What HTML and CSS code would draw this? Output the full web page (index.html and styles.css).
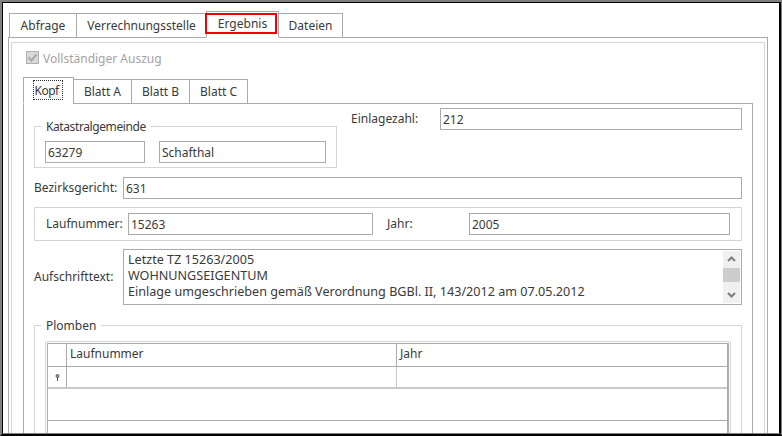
FILE: index.html
```html
<!DOCTYPE html>
<html lang="de">
<head>
<meta charset="utf-8">
<title>Ergebnis</title>
<link rel="stylesheet" href="styles.css">
</head>
<body>
<div class="frame">
<div class="window">
  <div class="tabs">
    <div class="tab t-abfrage">Abfrage</div>
    <div class="tab t-verr">Verrechnungsstelle</div>
    <div class="tab t-erg">Ergebnis<span class="marker"></span></div>
    <div class="tab t-dat">Dateien</div>
  </div>
  <div class="panel">
    <div class="panel-inner">
      <div class="check-row">
        <svg class="check" width="13" height="13" viewBox="0 0 13 13"><rect x=".5" y=".5" width="12" height="12" fill="#d8d8d8" stroke="#b0b0b0"/><path d="M2.500 6.500 5.500 9.500 10.500 3.500" fill="none" stroke="#a8a8a8" stroke-width="2"/></svg>
        <span class="check-label">Vollständiger Auszug</span>
      </div>
      <div class="subtabs">
        <div class="subtab first"><span class="focus">Kopf</span></div>
        <div class="subtab">Blatt A</div>
        <div class="subtab">Blatt B</div>
        <div class="subtab">Blatt C</div>
      </div>
      <div class="subpanel">
        <div class="top-row">
          <fieldset class="group kat">
            <legend class="kat-legend">Katastralgemeinde</legend>
            <div class="field w100">63279</div>
            <div class="field w167">Schafthal</div>
          </fieldset>
          <div class="einlage">
            <label class="lbl l-einlage">Einlagezahl:</label>
            <div class="field grow">212</div>
          </div>
        </div>
        <div class="row-bez">
          <label class="lbl l-main">Bezirksgericht:</label>
          <div class="field grow">631</div>
        </div>
        <div class="box-lauf">
          <label class="lbl l-lauf">Laufnummer:</label>
          <div class="field w245">15263</div>
          <label class="lbl l-jahr">Jahr:</label>
          <div class="field grow">2005</div>
        </div>
        <div class="row-auf">
          <label class="lbl l-main">Aufschrifttext:</label>
          <div class="memo">
            <div class="memo-text">Letzte TZ 15263/2005<br>WOHNUNGSEIGENTUM<br>Einlage umgeschrieben gemäß Verordnung BGBl. II, 143/2012 am 07.05.2012</div>
            <div class="scroll">
              <svg class="arrow" width="17" height="17" viewBox="0 0 17 17"><path d="M5 10 8.500 6.500 12 10" fill="none" stroke="#7d7d7d" stroke-width="2"/></svg>
              <div class="thumb"></div>
              <div class="track"></div>
              <svg class="arrow" width="17" height="17" viewBox="0 0 17 17"><path d="M5 7 8.500 10.500 12 7" fill="none" stroke="#7d7d7d" stroke-width="2"/></svg>
            </div>
          </div>
        </div>
        <fieldset class="group plomben">
          <legend class="plo-legend">Plomben</legend>
          <div class="grid-wrap">
            <div class="grid">
              <div class="g-row g-head">
                <div class="g-sel"></div>
                <div class="g-c1">Laufnummer</div>
                <div class="g-c2">Jahr</div>
              </div>
              <div class="g-row g-new">
                <div class="g-sel">
                  <svg class="key" width="5" height="7" viewBox="0 0 5 7"><circle cx="2.500" cy="2" r="1.500" fill="#aaa" stroke="#555"/><path d="M2.500 3V7" stroke="#555"/></svg>
                </div>
                <div class="g-c1 light"></div>
                <div class="g-c2"></div>
              </div>
              <div class="g-blank"></div>
              <div class="g-blank"></div>
            </div>
          </div>
        </fieldset>
      </div>
    </div>
  </div>
</div>
</div>
</body>
</html>
```
FILE: styles.css
```css
* { box-sizing: border-box; }
html, body { margin: 0; padding: 0; background: #fff; }
body { width: 782px; height: 436px; overflow: hidden; font: 12px/16px "Noto Sans", sans-serif; color: #3a3a3a; }
.frame { width: 782px; height: 436px; overflow: hidden; border-style: solid; border-width: 2px 1px 2px 2px; border-color: #808080 #808080 #000 #808080; }
.window { height: 432px; overflow: hidden; background: #fff; border-style: solid; border-width: 1px 2px 1px 1px; border-color: #000 #000 #808080 #000; padding: 8px 11px 0 5px; }

.tabs { display: flex; height: 27px; align-items: flex-end; padding-left: 1px; position: relative; z-index: 1; margin-bottom: -1px; }
.tab { height: 25px; background: #fff; border: 1px solid #ababab; padding-top: 4px; text-align: center; }
.t-abfrage { width: 68px; }
.t-verr { width: 131px; margin-left: -1px; }
.t-erg { width: 73px; margin-left: -1px; height: 27px; border-bottom-color: #fff; position: relative; padding-top: 4px; }
.t-dat { width: 65px; margin-left: -1px; }
.marker { position: absolute; left: -2px; top: 1px; width: 72px; height: 21px; border: 2px solid #f00000; }

.panel { border: 1px solid #ababab; border-bottom: 0; padding: 4px 2px 0 2px; height: 400px; }
.panel-inner { border: 1px solid #d5d5d5; border-bottom: 0; height: 400px; padding: 8px 11px 0 11px; }
.check-row { display: flex; align-items: center; height: 13px; padding-left: 3px; gap: 4px; margin-bottom: 13px; }
.check { display: block; flex: none; }
.check-label { color: #a3a3a3; padding-top: 2px; }

.subtabs { display: flex; align-items: flex-end; height: 27px; position: relative; z-index: 1; margin-bottom: -1px; }
.subtab { height: 25px; width: 59px; border: 1px solid #ababab; margin-left: -1px; background: #fff; text-align: center; padding-top: 4px; }
.subtab.first { width: 51px; height: 27px; margin-left: 0; border-bottom-color: #fff; padding-top: 3px; }
.focus { outline: 1px dotted #333; outline-offset: 0; padding: 2px 0 0 1px; margin-right: 2px; display: inline-block; line-height: 16px; height: 18px; letter-spacing: -0.5px; width: 28px; text-align: left; }

.subpanel { border: 1px solid #ababab; border-bottom: 0; height: 340px; padding: 4px 10px 0 10px; }
.field { height: 22px; border: 1px solid #ababab; background: #fff; padding: 2px 0 0 2px; line-height: 17px; }
.grow { flex: 1; }
.w100 { width: 100px; }
.w167 { width: 167px; }
.w245 { width: 245px; }
.lbl { display: block; flex: none; }

.top-row { display: flex; height: 59px; align-items: flex-start; }
fieldset.group { margin: 0; min-width: 0; border: 1px solid #d5d5d5; }
legend { padding: 2px 5px 0; line-height: 16px; }
.kat { width: 303px; height: 51px; margin-top: 9px !important; padding: 6px 0 0 10px; display: flex; gap: 14px; }
.kat-legend { margin-left: -4px; letter-spacing: -0.4px; }
.einlage { display: flex; flex: 1; margin-left: 14px; }
.l-einlage { width: 89px; padding-top: 3px; }

.row-bez { display: flex; margin-top: 10px; }
.l-main { width: 89px; }
.row-bez .l-main { padding-top: 3px; }

.box-lauf { display: flex; height: 34px; margin-top: 8px; border: 1px solid #d5d5d5; padding: 5px 11px 0 11px; }
.l-lauf { width: 82px; padding-top: 3px; }
.l-jahr { width: 82px; margin-left: 14px; padding-top: 3px; }

.row-auf { display: flex; margin-top: 8px; align-items: center; }
.memo { flex: 1; height: 56px; border: 1px solid #ababab; display: flex; padding: 1px; }
.memo-text { flex: 1; padding: 1px 0 0 3px; font-size: 12.6px; line-height: 16px; white-space: nowrap; overflow: hidden; }
.scroll { width: 17px; flex: none; background: #f0f0f0; display: flex; flex-direction: column; }
.arrow { display: block; flex: none; }
.thumb { height: 14px; background: #cdcdcd; flex: none; }
.track { flex: 1; }

.plomben { height: 131px; margin-top: 11px !important; padding: 7px 10px 0 10px; }
.plo-legend { margin-left: -4px; }
.grid-wrap { border: 1px solid #d5d5d5; padding: 1px; height: 100px; }
.grid { border: 1px solid #ababab; border-right-width: 2px; height: 100px; }
.g-row { display: flex; }
.g-head { height: 23px; border-bottom: 1px solid #ababab; }
.g-new { height: 22px; border-bottom: 2px solid #c8c8c8; }
.g-sel { width: 19px; flex: none; border-right: 1px solid #ababab; display: flex; align-items: center; justify-content: center; }
.key { display: block; }
.g-c1 { width: 330px; flex: none; border-right: 1px solid #ababab; padding: 2px 0 0 3px; }
.g-c1.light { border-right-color: #c8c8c8; }
.g-c2 { flex: 1; padding: 2px 0 0 3px; }
.g-blank { height: 32px; border-bottom: 1px solid #ababab; }
```
